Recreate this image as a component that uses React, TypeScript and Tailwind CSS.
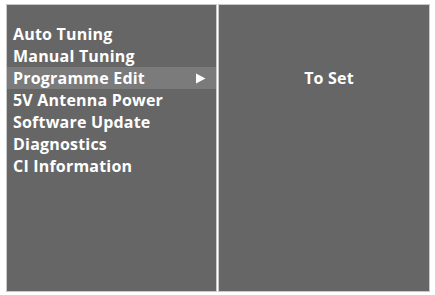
const items = [
  "Auto Tuning",
  "Manual Tuning",
  "Programme Edit",
  "5V Antenna Power",
  "Software Update",
  "Diagnostics",
  "CI Information",
];

export default function App() {
  return (
    <div
      className="w-[435px] h-[295px] bg-white pt-[4px] pl-[6px] flex gap-[1px]"
      style={{ fontFamily: '"Open Sans", "Liberation Sans", sans-serif' }}
    >
      {/* menu */}
      <div className="w-[211px] h-[288px] bg-[#666666] border border-[#c8c8c8] pt-[18px]">
        {items.map((item) => (
          <div
            key={item}
            className={
              "h-[22px] flex items-center justify-between pl-[6px] pr-[10px] text-[16px] tracking-[0.2px] font-bold text-white leading-none " +
              (item === "Programme Edit" ? "bg-[#7b7b7b]" : "")
            }
          >
            <span>{item}</span>
            {item === "Programme Edit" && (
              <svg width="11" height="11" viewBox="0 0 11 11">
                <path d="M1 0.5 L10.5 5.5 L1 10.5 Z" fill="white" />
              </svg>
            )}
          </div>
        ))}
      </div>

      {/* detail */}
      <div className="w-[212px] h-[288px] bg-[#666666] border border-[#c8c8c8] pt-[62px] pl-[10px]">
        <div className="h-[22px] flex items-center justify-center text-[16px] tracking-[0.2px] font-bold text-white leading-none">
          To Set
        </div>
      </div>
    </div>
  );
}
